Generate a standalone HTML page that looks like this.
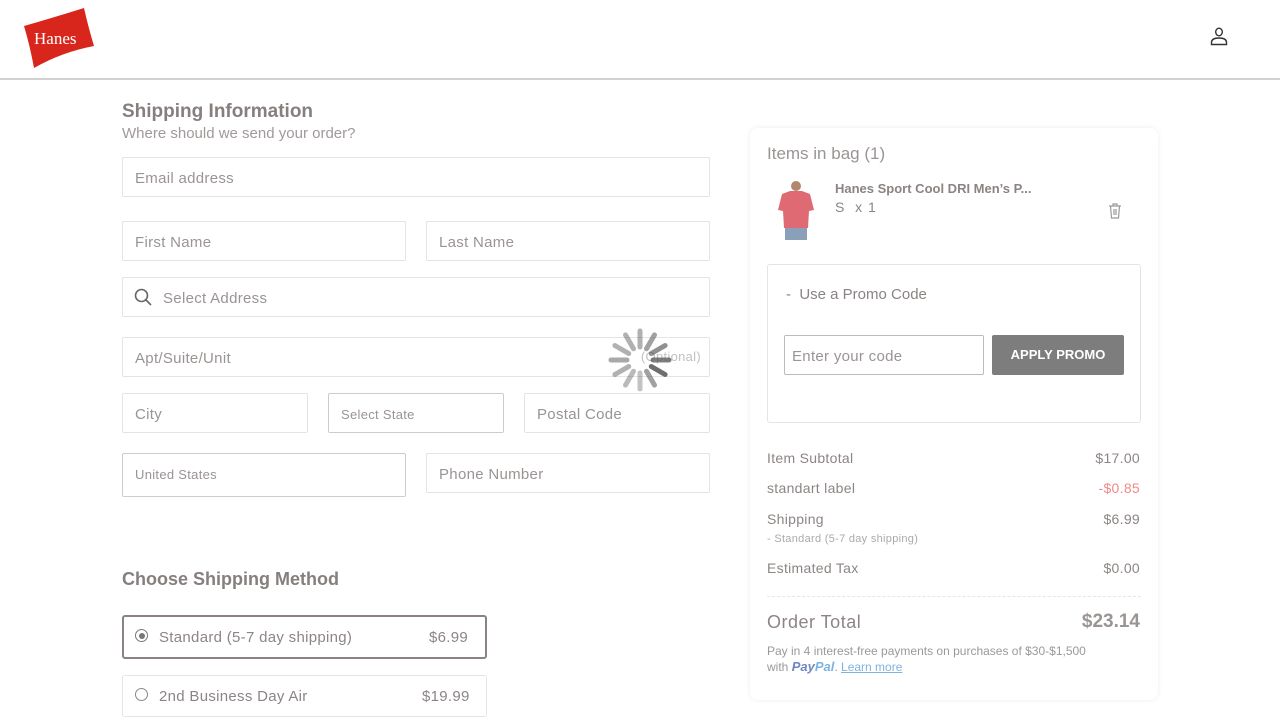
<!DOCTYPE html>
<html><head><meta charset="utf-8"><style>
*{box-sizing:border-box;margin:0;padding:0}
body{width:1280px;height:720px;overflow:hidden;background:#fff;font-family:"Liberation Sans",sans-serif;color:#8c8583;position:relative}
.a{position:absolute}
.in{position:absolute;border:1px solid #e6e4e3;border-radius:2px;height:40px;font-size:15px;color:#9a9492;padding:0 12px;line-height:41px;letter-spacing:.3px}
.r{position:absolute;font-size:14px;letter-spacing:.3px}
</style></head><body>
<div class="a" style="left:0;top:0;width:1280px;height:80px;border-bottom:2px solid #d4d2d1"></div>
<svg class="a" style="left:22px;top:6px" width="74" height="64" viewBox="0 0 74 64"><path d="M2 20 Q30 12 62 2 Q66 20 72 40 Q40 46 12 62 Q8 40 2 20Z" fill="#d9261c"/><text x="12" y="38" fill="#fff" font-family="Liberation Serif,serif" font-size="17">Hanes</text></svg>
<svg class="a" style="left:1209px;top:26px" width="20" height="20" viewBox="0 0 20 20" fill="none" stroke="#333" stroke-width="1.4"><ellipse cx="10" cy="6" rx="3.3" ry="3.8"/><path d="M2.5 18.5 V16 Q3 12 10 12 Q17 12 17.5 16 V18.5 Z"/></svg>

<div class="a" style="left:122px;top:101px;font-size:19px;font-weight:bold;color:#857f7e">Shipping Information</div>
<div class="a" style="left:122px;top:125px;font-size:15px;color:#a09a98">Where should we send your order?</div>
<div class="in" style="left:122px;top:157px;width:588px">Email address</div>
<div class="in" style="left:122px;top:221px;width:284px">First Name</div>
<div class="in" style="left:426px;top:221px;width:284px">Last Name</div>
<div class="in" style="left:122px;top:277px;width:588px;padding-left:40px">Select Address</div>
<svg class="a" style="left:134px;top:288px" width="18" height="18" viewBox="0 0 18 18" fill="none" stroke="#666" stroke-width="1.6"><circle cx="7.5" cy="7.5" r="6"/><path d="M12 12l5 5"/></svg>
<div class="in" style="left:122px;top:337px;width:588px">Apt/Suite/Unit<span style="position:absolute;right:8px;font-size:13px;color:#c4c0bf;line-height:38px">(Optional)</span></div>
<div class="in" style="left:122px;top:393px;width:186px">City</div>
<div class="in" style="left:328px;top:393px;width:176px;border-color:#ccc;font-size:13px">Select State</div>
<div class="in" style="left:524px;top:393px;width:186px">Postal Code</div>
<div class="in" style="left:122px;top:453px;width:284px;height:44px;border-color:#ccc;font-size:13px;line-height:42px">United States</div>
<div class="in" style="left:426px;top:453px;width:284px">Phone Number</div>

<svg class="a" style="left:606px;top:326px" width="68" height="68" viewBox="-34 -34 68 68" stroke-linecap="round" stroke-width="5">
<g stroke="#555"><line x1="0" y1="-13" x2="0" y2="-29" transform="rotate(0)" opacity=".45"/><line x1="0" y1="-13" x2="0" y2="-29" transform="rotate(30)" opacity=".55"/><line x1="0" y1="-13" x2="0" y2="-29" transform="rotate(60)" opacity=".65"/><line x1="0" y1="-13" x2="0" y2="-29" transform="rotate(90)" opacity=".75"/><line x1="0" y1="-13" x2="0" y2="-29" transform="rotate(120)" opacity=".85"/><line x1="0" y1="-13" x2="0" y2="-29" transform="rotate(150)" opacity=".55"/><line x1="0" y1="-13" x2="0" y2="-29" transform="rotate(180)" opacity=".35"/><line x1="0" y1="-13" x2="0" y2="-29" transform="rotate(210)" opacity=".4"/><line x1="0" y1="-13" x2="0" y2="-29" transform="rotate(240)" opacity=".45"/><line x1="0" y1="-13" x2="0" y2="-29" transform="rotate(270)" opacity=".5"/><line x1="0" y1="-13" x2="0" y2="-29" transform="rotate(300)" opacity=".45"/><line x1="0" y1="-13" x2="0" y2="-29" transform="rotate(330)" opacity=".45"/></g></svg>

<div class="a" style="left:122px;top:569px;font-size:18px;font-weight:bold;color:#857f7e">Choose Shipping Method</div>
<div class="a" style="left:122px;top:615px;width:365px;height:44px;border:2px solid #8a8381;border-radius:3px"></div>
<div class="a" style="left:135px;top:629px;width:13px;height:13px;border:1px solid #777;border-radius:50%"><div style="margin:2.5px;width:6px;height:6px;border-radius:50%;background:#777"></div></div>
<div class="r" style="left:159px;top:629px;font-size:15px">Standard (5-7 day shipping)</div>
<div class="r" style="left:429px;top:629px;font-size:15px">$6.99</div>
<div class="a" style="left:122px;top:675px;width:365px;height:42px;border:1px solid #e6e4e3;border-radius:3px"></div>
<div class="a" style="left:135px;top:688px;width:13px;height:13px;border:1px solid #888;border-radius:50%"></div>
<div class="r" style="left:159px;top:688px;font-size:15px">2nd Business Day Air</div>
<div class="r" style="left:422px;top:688px;font-size:15px">$19.99</div>

<div class="a" style="left:750px;top:128px;width:408px;height:572px;border-radius:8px;box-shadow:0 0 6px rgba(0,0,0,.08)"></div>
<div class="a" style="left:767px;top:144px;font-size:17px;color:#9a9492">Items in bag (1)</div>
<svg class="a" style="left:776px;top:180px" width="40" height="60" viewBox="0 0 40 60"><circle cx="20" cy="6" r="5" fill="#b08870"/><path d="M6 14 L14 11 L26 11 L34 14 L38 30 L33 31 L32 48 L8 48 L7 31 L2 30Z" fill="#e06a74"/><rect x="9" y="48" width="22" height="12" fill="#8aa0b8"/></svg>
<div class="a" style="left:835px;top:181px;font-size:13px;font-weight:bold;color:#8a8482">Hanes Sport Cool DRI Men’s P...</div>
<div class="a" style="left:835px;top:199px;font-size:14px;letter-spacing:1px">S &nbsp;x 1</div>
<svg class="a" style="left:1108px;top:203px" width="14" height="16" viewBox="0 0 14 16" fill="none" stroke="#999" stroke-width="1.2"><path d="M1 3h12M5 3V1h4v2M2.5 3l1 12h7l1-12M6 6v6M8 6v6"/></svg>
<div class="a" style="left:767px;top:264px;width:374px;height:159px;border:1px solid #e6e4e3;border-radius:3px"></div>
<div class="a" style="left:786px;top:286px;font-size:15px;color:#8a8482">-&nbsp; Use a Promo Code</div>
<div class="in" style="left:784px;top:335px;width:200px;border-color:#bbb;padding-left:7px">Enter your code</div>
<div class="a" style="left:992px;top:335px;width:132px;height:40px;background:#7d7d7d;border-radius:2px;color:#fff;font-size:13px;font-weight:bold;text-align:center;line-height:40px">APPLY PROMO</div>
<div class="r" style="left:767px;top:450px">Item Subtotal</div><div class="r" style="right:140px;top:450px">$17.00</div>
<div class="r" style="left:767px;top:480px">standart label</div><div class="r" style="right:140px;top:480px;color:#f08a85">-$0.85</div>
<div class="r" style="left:767px;top:511px">Shipping</div><div class="r" style="right:140px;top:511px">$6.99</div>
<div class="r" style="left:767px;top:533px;font-size:11px;color:#aaa">- Standard (5-7 day shipping)</div>
<div class="r" style="left:767px;top:560px">Estimated Tax</div><div class="r" style="right:140px;top:560px">$0.00</div>
<div class="a" style="left:767px;top:596px;width:374px;border-top:1px dashed #e8e6e5"></div>
<div class="a" style="left:767px;top:612px;font-size:18px;letter-spacing:.5px">Order Total</div>
<div class="a" style="right:140px;top:611px;font-size:19px;font-weight:bold;color:#9a9492">$23.14</div>
<div class="a" style="left:767px;top:643px;font-size:12px;line-height:16px;color:#999">Pay in 4 interest-free payments on purchases of $30-$1,500<br>with <b style="font-style:italic;color:#6f86c0;font-size:13px">Pay<span style="color:#7fb3df">Pal</span></b>. <u style="color:#7fb3df">Learn more</u></div>
</body></html>
